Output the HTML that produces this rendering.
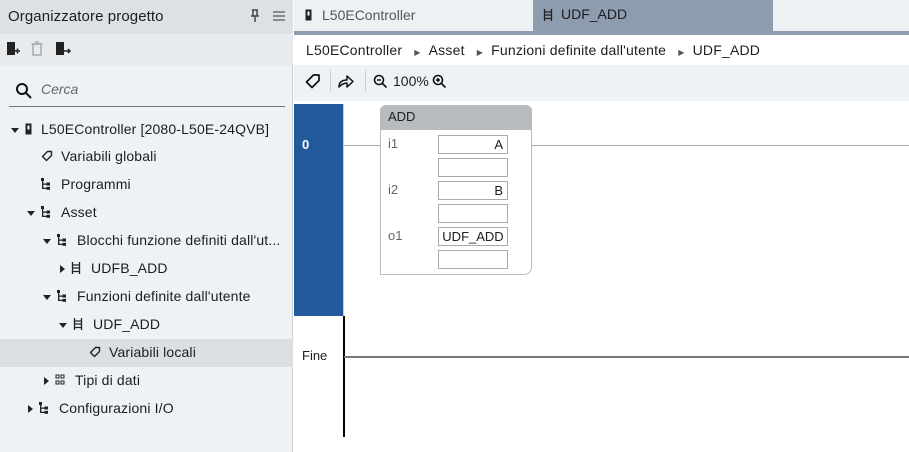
<!DOCTYPE html>
<html><head><meta charset="utf-8"><style>
*{margin:0;padding:0;box-sizing:border-box}
body{width:909px;height:452px;overflow:hidden;font-family:"Liberation Sans",sans-serif;font-size:14px;color:#1d1d1d;background:#fff;position:relative}
.a{position:absolute}
.tree div{position:absolute;height:28px;line-height:28px;white-space:nowrap;letter-spacing:0.15px}
.tri{display:inline-block;width:0;height:0;border-left:4px solid transparent;border-right:4px solid transparent;border-top:5px solid #222;vertical-align:middle;margin-right:6px}
.tr{display:inline-block;width:0;height:0;border-top:4px solid transparent;border-bottom:4px solid transparent;border-left:5px solid #222;vertical-align:middle;margin-right:6px}
svg.i{display:inline-block;vertical-align:middle;margin-right:8px;margin-top:-2px}
.f{position:absolute;left:438px;width:70px;height:19px;border:1px solid #aaa;background:#fff;text-align:right;padding-right:4px;font-size:13px;line-height:17px}
.lb{position:absolute;left:388px;color:#666;font-size:13px}
</style></head><body>
<svg width="0" height="0" style="position:absolute"><defs>
<symbol id="h" viewBox="0 0 10 12"><rect x="0" y="0" width="3" height="3" fill="#222"/><rect x="1" y="3" width="1.3" height="8" fill="#222"/><rect x="1" y="5.5" width="5" height="1.3" fill="#222"/><rect x="1" y="9.7" width="5" height="1.3" fill="#222"/><rect x="5.5" y="4.5" width="3.5" height="3" fill="#222"/><rect x="5.5" y="8.8" width="3.5" height="3" fill="#222"/></symbol>
<symbol id="l" viewBox="0 0 10 12"><path d="M1.5 0v12M8.5 0v12M1.5 3h7M1.5 6h7M1.5 9.5h7" stroke="#222" stroke-width="1.3" fill="none"/></symbol>
<symbol id="t" viewBox="0 0 12 12"><path d="M6.5 1.5h4v4l-5 5-4-4z" stroke="#222" stroke-width="1.4" fill="none" stroke-linejoin="round"/></symbol>
<symbol id="d" viewBox="0 0 10 12"><path d="M1 1h3v3H1zM6 1h3v3H6zM1 7h3v3H1zM6 7h3v3H6z" stroke="#222" stroke-width="1" fill="none"/></symbol>
<symbol id="c" viewBox="0 0 8 12"><rect x="0.5" y="0.5" width="6" height="11" fill="#222"/><rect x="2.5" y="2.5" width="2" height="4" fill="#fff"/></symbol>
</defs></svg>
<!-- left panel -->
<div class="a" style="left:0;top:0;width:293px;height:452px;background:#eff2f5;border-right:1px solid #cdd1d5"></div>
<div class="a" style="left:0;top:0;width:293px;height:34px;background:#dde1e5"></div>
<div class="a" style="left:8px;top:8px;font-size:15px;letter-spacing:0.1px">Organizzatore progetto</div>
<svg class="a" style="left:249px;top:9px" width="12" height="14"><path d="M3 1h6M4 1v6M8 1v6M2 7h8M6 7v6" stroke="#444" stroke-width="1.5" fill="none"/></svg>
<svg class="a" style="left:273px;top:11px" width="12" height="10"><path d="M0 1h12M0 5h12M0 9h12" stroke="#555" stroke-width="1.3"/></svg>
<div class="a" style="left:0;top:34px;width:293px;height:32px;background:#e8ebee"></div>
<svg class="a" style="left:6px;top:41px" width="66" height="16"><rect x="1" y="1" width="8" height="13" fill="#222"/><path d="M9 10h5M11.5 7.5v5" stroke="#222" stroke-width="1.5"/><rect x="27" y="3" width="8" height="11" fill="none" stroke="#aaa" stroke-width="1.5"/><path d="M25.5 3h11M29 1h4" stroke="#aaa" stroke-width="1.5"/><rect x="50" y="1" width="8" height="13" fill="#222"/><path d="M58 10h6M62 8l2 2-2 2" stroke="#222" stroke-width="1.5" fill="none"/></svg>
<svg class="a" style="left:15px;top:82px" width="18" height="18"><circle cx="7" cy="7" r="5" fill="none" stroke="#111" stroke-width="2"/><path d="M11 11l5 5" stroke="#111" stroke-width="2"/></svg>
<div class="a" style="left:41px;top:81px;font-style:italic;color:#666">Cerca</div>
<div class="a" style="left:9px;top:106px;width:276px;height:1px;background:#777"></div>
<div class="a" style="left:0;top:339px;width:293px;height:28px;background:#dcdfe2"></div>
<div class="tree">
<div style="left:11px;top:115px"><span class="tri"></span><svg class="i" width="8" height="12"><use href="#c"/></svg>L50EController [2080-L50E-24QVB]</div>
<div style="left:41px;top:142px"><svg class="i" width="12" height="12"><use href="#t"/></svg>Variabili globali</div>
<div style="left:41px;top:170px"><svg class="i" width="10" height="12" style="margin-right:10px"><use href="#h"/></svg>Programmi</div>
<div style="left:27px;top:198px"><span class="tri"></span><svg class="i" width="10" height="12" style="margin-right:10px"><use href="#h"/></svg>Asset</div>
<div style="left:43px;top:226px"><span class="tri"></span><svg class="i" width="10" height="12" style="margin-right:10px"><use href="#h"/></svg>Blocchi funzione definiti dall'ut...</div>
<div style="left:60px;top:254px"><span class="tr"></span><svg class="i" width="10" height="12" style="margin-right:10px"><use href="#l"/></svg>UDFB_ADD</div>
<div style="left:43px;top:282px"><span class="tri"></span><svg class="i" width="10" height="12" style="margin-right:10px"><use href="#h"/></svg>Funzioni definite dall'utente</div>
<div style="left:59px;top:310px"><span class="tri"></span><svg class="i" width="10" height="12" style="margin-right:10px"><use href="#l"/></svg>UDF_ADD</div>
<div style="left:89px;top:338px"><svg class="i" width="12" height="12"><use href="#t"/></svg>Variabili locali</div>
<div style="left:44px;top:366px"><span class="tr"></span><svg class="i" width="10" height="12" style="margin-right:10px"><use href="#d"/></svg>Tipi di dati</div>
<div style="left:28px;top:394px"><span class="tr"></span><svg class="i" width="10" height="12" style="margin-right:10px"><use href="#h"/></svg>Configurazioni I/O</div>
</div>
<!-- right -->
<div class="a" style="left:294px;top:0;width:615px;height:31px;background:#eef1f4"></div>
<div class="a" style="left:533px;top:0;width:240px;height:31px;background:#8d9daf"></div>
<div class="a" style="left:294px;top:31px;width:615px;height:4px;background:#8d9daf"></div>
<svg class="a" style="left:305px;top:9px" width="8" height="12"><use href="#c"/></svg>
<div class="a" style="left:322px;top:7px;color:#555">L50EController</div>
<svg class="a" style="left:543px;top:9px" width="10" height="12"><use href="#l"/></svg>
<div class="a" style="left:561px;top:6px;color:#1d1d1d">UDF_ADD</div>
<div class="a" style="left:294px;top:35px;width:615px;height:30px;background:#fff"></div>
<div class="a" style="left:306px;top:42px;font-size:14px;letter-spacing:0.2px">L50EController <span style="font-size:8px;color:#555;margin:0 8px">&#x25B6;</span>Asset <span style="font-size:8px;color:#555;margin:0 8px">&#x25B6;</span>Funzioni definite dall'utente <span style="font-size:8px;color:#555;margin:0 8px">&#x25B6;</span>UDF_ADD</div>
<div class="a" style="left:294px;top:65px;width:615px;height:36px;background:#eff2f5"></div>
<svg class="a" style="left:305px;top:73px" width="16" height="16"><path d="M8.5 2h5.5v5.5l-7 7-5.5-5.5z" stroke="#111" stroke-width="1.7" fill="none" stroke-linejoin="round"/></svg>
<div class="a" style="left:330px;top:70px;width:1px;height:22px;background:#ccc"></div>
<svg class="a" style="left:337px;top:73px" width="18" height="16"><path d="M2 14c0-5 3-7 8-7V3l6 5.5-6 5.5v-4c-3 0-5 1-8 4z" stroke="#111" stroke-width="1.5" fill="none" stroke-linejoin="round"/></svg>
<div class="a" style="left:365px;top:70px;width:1px;height:22px;background:#ccc"></div>
<svg class="a" style="left:373px;top:74px" width="16" height="16"><circle cx="6" cy="6" r="4.5" fill="none" stroke="#111" stroke-width="1.6"/><path d="M9.5 9.5l4 4M4 6h4" stroke="#111" stroke-width="1.6"/></svg>
<div class="a" style="left:393px;top:73px;font-size:14px">100%</div>
<svg class="a" style="left:432px;top:74px" width="16" height="16"><circle cx="6" cy="6" r="4.5" fill="none" stroke="#111" stroke-width="1.6"/><path d="M9.5 9.5l4 4M4 6h4M6 4v4" stroke="#111" stroke-width="1.6"/></svg>
<!-- ladder -->
<div class="a" style="left:294px;top:104px;width:49px;height:212px;background:#235a9c"></div>
<div class="a" style="left:302px;top:137px;color:#fff;font-weight:bold;font-size:13px">0</div>
<div class="a" style="left:343px;top:104px;width:1px;height:212px;background:#ccc"></div>
<div class="a" style="left:343px;top:316px;width:1.5px;height:121px;background:#000"></div>
<div class="a" style="left:344px;top:145px;width:565px;height:1px;background:#aaa"></div>
<div class="a" style="left:344px;top:356px;width:565px;height:2px;background:#777"></div>
<div class="a" style="left:302px;top:348px;font-size:13px">Fine</div>
<div class="a" style="left:380px;top:105px;width:152px;height:170px;background:#fff;border:1px solid #bbb;border-radius:6px 6px 8px 0"></div>
<div class="a" style="left:380px;top:105px;width:152px;height:25px;background:#b9bcbf;border-radius:6px 6px 0 0;padding:4px 8px;font-size:13px">ADD</div>
<div class="lb" style="top:136px">i1</div>
<div class="lb" style="top:182px">i2</div>
<div class="lb" style="top:228px">o1</div>
<div class="f" style="top:135px">A</div>
<div class="f" style="top:158px"></div>
<div class="f" style="top:181px">B</div>
<div class="f" style="top:204px"></div>
<div class="f" style="top:227px;text-align:center;padding:0">UDF_ADD</div>
<div class="f" style="top:250px"></div>
</body></html>
